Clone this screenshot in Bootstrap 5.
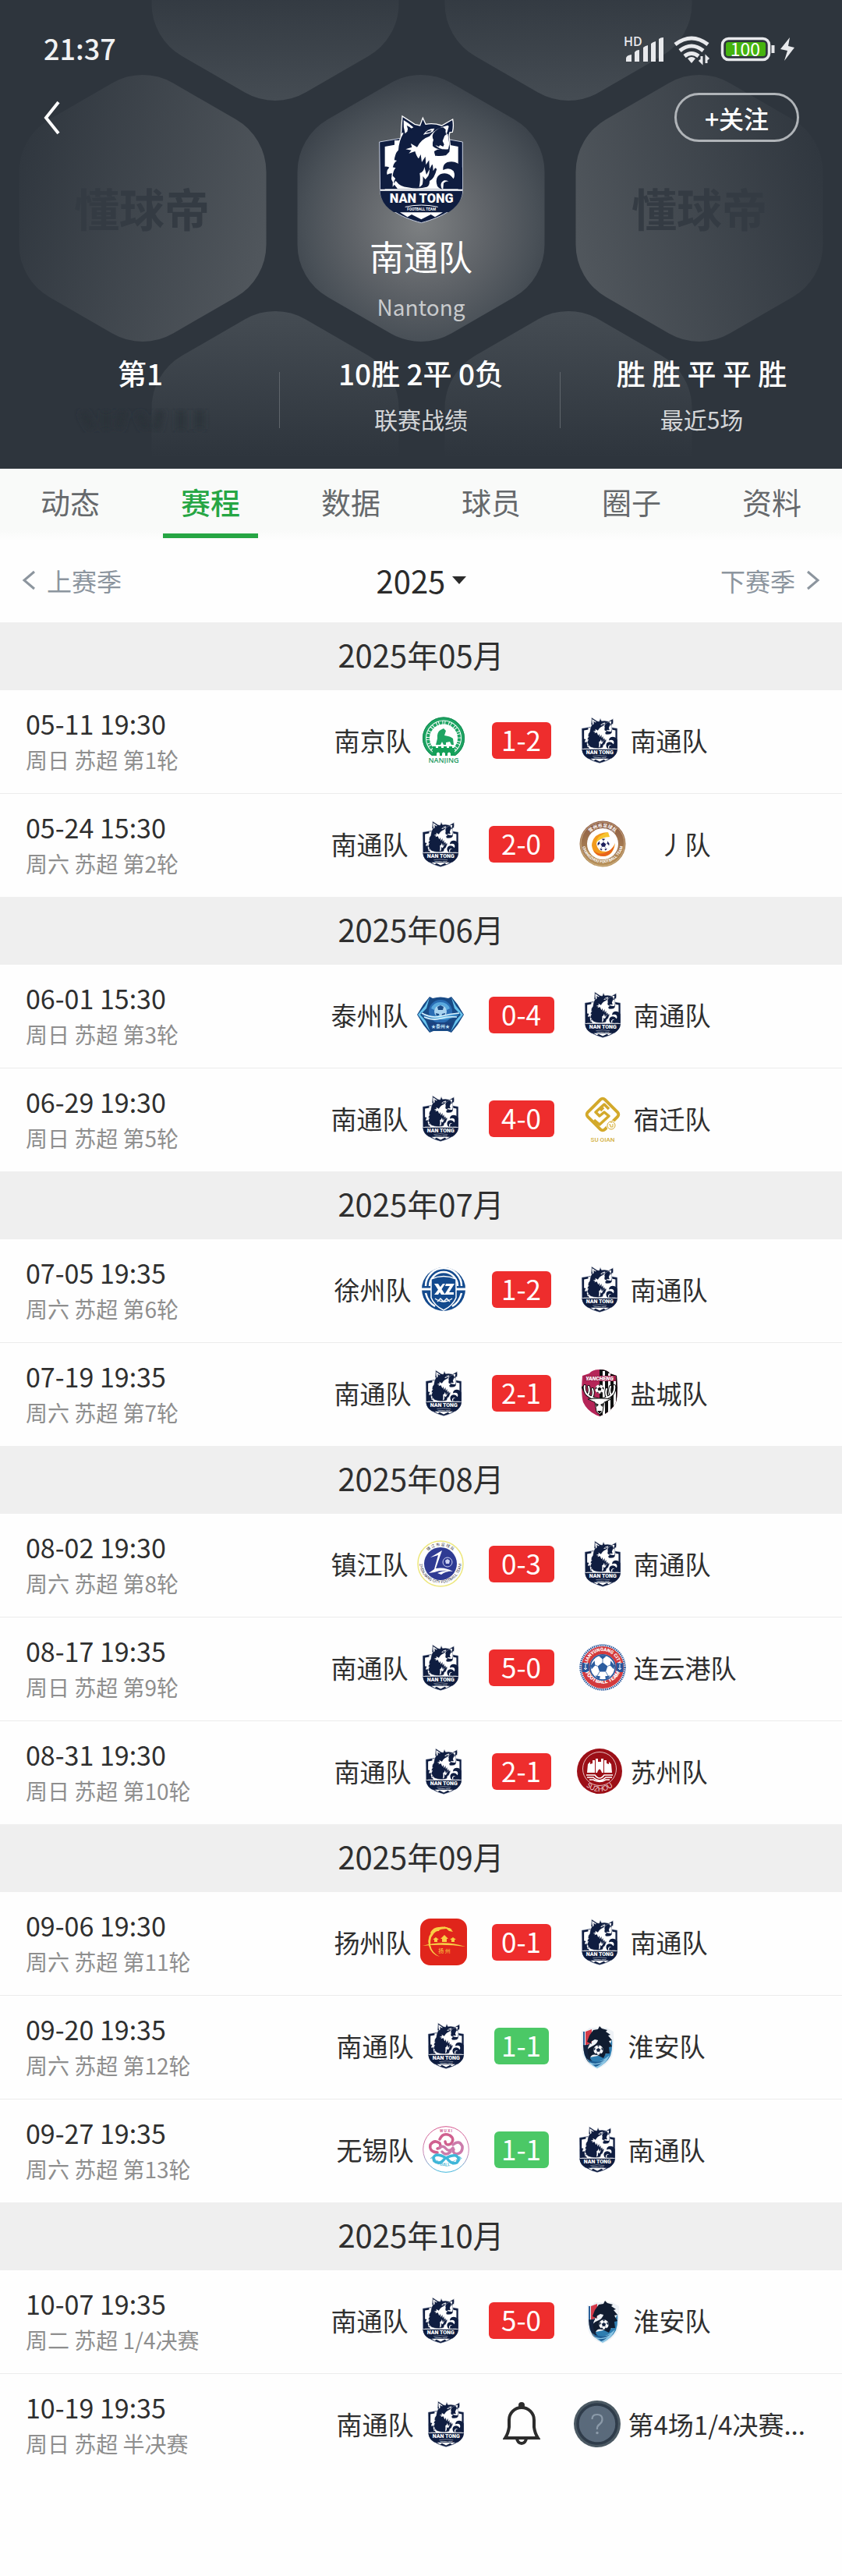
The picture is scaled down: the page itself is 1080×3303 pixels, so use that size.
<!DOCTYPE html>
<html lang="zh-CN">
<head>
<meta charset="utf-8">
<meta name="viewport" content="width=device-width, initial-scale=1">
<title>南通队 - 赛程</title>
<link href="https://cdn.jsdelivr.net/npm/bootstrap@5.3.0/dist/css/bootstrap.min.css" rel="stylesheet">
<style>
  body { font-family: "Noto Sans CJK SC", "Noto Sans", sans-serif; color: #2f2f2f; background: #fefefe; }
  a { color: inherit; text-decoration: none; }
  button, select { font-family: inherit; color: inherit; }
  .team-head { background: #2e353d; color: #fff; isolation: isolate; }
  .head-art { position: absolute; inset: 0; width: 100%; height: 100%; z-index: -1; }
  .status-line { padding: 36px 60px 0 56px; height: 88px; }
  .clock { font-size: 36px; font-weight: 500; line-height: 50px; color: #f1f2f3; }
  .top-row { padding: 31px 55px 0 55px; }
  .side-col { width: 160px; }
  .back-btn { height: 63px; }
  .follow-btn { width: 160px; height: 63px; border: 3px solid #b0b4b8; border-radius: 32px; font-size: 32px; line-height: 50px; font-weight: 500; }
  .crest-lg { width: 112px; height: 140px; margin-top: 28px; }
  .team-title { font-size: 44px; line-height: 50px; margin: 16px 0 20px; font-weight: 400; }
  .team-sub { font-size: 28px; line-height: 40px; color: #c9cbcd; }
  .stat-row { padding: 40px 0 44px; }
  .stat-row > div { flex: 1 1 0; position: relative; }
  .stat-row > div + div::before { content: ""; position: absolute; left: -2px; top: 24px; bottom: 8px; width: 1px; background: #5f656b; }
  .stat-main { font-size: 37px; line-height: 50px; font-weight: 500; }
  .stat-label { font-size: 30px; line-height: 40px; margin-top: 14px; color: #d4d6d8; min-height: 40px; }
  .tab-strip { background: linear-gradient(#f9faf9 85%, #fefefe); }
  .tab-strip a { flex: 1 1 0; height: 93px; padding-top: 14px; font-size: 38px; line-height: 56px; color: #66696c; text-align: center; }
  .tab-strip a.active { color: #26a644; font-weight: 500; }
  .tab-strip a.active::after { content: ""; display: block; width: 122px; height: 6px; margin: 13px auto 0; background: #26a644; }
  .season-row { height: 104px; padding: 0 28px 5px; font-size: 32px; color: #8c959e; }
  .season-row a { gap: 14px; }
  .season-pick { gap: 8px; color: #2b2b2b; }
  .season-pick select { appearance: none; border: 0; padding: 0; background: none; font-size: 40px; line-height: 60px; }
  .month-bar { background: #efefef; height: 87px; font-size: 40px; line-height: 83px; margin: 0; font-weight: 400; text-align: center; }
  .match-row { height: 132px; padding-bottom: 4px; }
  .match-row + .match-row { border-top: 1px solid #ececec; height: 133px; }
  .when { flex: 0 0 257px; padding-left: 33px; white-space: nowrap; }
  .when time { display: block; font-size: 34px; line-height: 48px; padding-top: 2px; }
  .when span { display: block; font-size: 28px; line-height: 44px; color: #8e8e8e; }
  .side { flex: 1 1 0; min-width: 0; gap: 11px; font-size: 33px; line-height: 48px; white-space: nowrap; }
  .side.away { gap: 10px; }
  .crest { width: 60px; height: 60px; flex: none; }
  .duel { gap: 32px; }
  .score { width: 84px; height: 47px; border-radius: 6px; background: #ee2d2d; color: #fff; font-size: 35px; line-height: 44px; text-align: center; }
  .score.mid { width: 76px; }
  .score.draw { width: 70px; background: #4bc866; }
  .bell-btn { width: 70px; line-height: 0; }
</style>
<script src="https://cdn.jsdelivr.net/npm/bootstrap@5.3.0/dist/js/bootstrap.bundle.min.js"></script>
</head>
<body>

<svg width="0" height="0" class="position-absolute" aria-hidden="true">
  <defs>
    <linearGradient id="gBrown" x1="0" y1="0" x2="0" y2="1"><stop offset="0" stop-color="#8b5a44"/><stop offset="1" stop-color="#b8935a"/></linearGradient>
    <linearGradient id="gPink" x1="0" y1="0" x2="0" y2="1"><stop offset="0" stop-color="#d6558c"/><stop offset=".6" stop-color="#c98bb8"/><stop offset="1" stop-color="#3db8dc"/></linearGradient>
    <linearGradient id="gSea" x1="0" y1="0" x2="1" y2="0"><stop offset="0" stop-color="#1d5ba0"/><stop offset=".5" stop-color="#6fc3ec"/><stop offset="1" stop-color="#1d6cb4"/></linearGradient>
    <symbol id="ball" viewBox="0 0 40 40">
      <circle cx="20" cy="20" r="19" fill="#fff"/>
      <g fill="currentColor"><path d="M20 12l8 6-3 9H15l-3-9z"/><path d="M14 2q6-2 12 0l-6 5zM1 17l6-8 1 8-6 6zM39 17l-6-8-1 8 6 6zM8 33l8 1-1 5q-5-2-7-6zM32 33l-8 1 1 5q5-2 7-6z"/></g>
      <path d="M20 12V6M28 18l5-2M25 27l4 7M15 27l-4 7M12 18l-5-2" stroke="currentColor" fill="none"/>
    </symbol>

    <symbol id="nt" viewBox="252 83 334 420">
      <path d="M259 188l82-14h160l78 14v190c-3 58-78 100-159 121-82-21-155-63-158-121z" fill="#0f1d40" stroke="#c9d0e0" stroke-width="3"/>
      <path d="M280 206l37-7v-17h210v17l35 7v164H280z" fill="#fff"/>
      <path d="M264 368V290q16-12 33-4-13 12-8 28 12-10 32-2-22 6-14 24 6 14 22 32zM578 368v-80q-22-32-58-22-18 8-16 30 24-12 40 4 8 16 0 30-20-30-50-18-24 14-12 46 6 10 18 12-12-24 8-34 18-2 22 14-2 12-10 18z" fill="#0f1d40"/>
      <path d="M506 346q20-16 30 6l-6 16h-26z" fill="#0f1d40"/>
      <path d="M342 163q2-40 5-74l48 31 20 5 11-29 11 24q30-6 62 5l42-24q5 26-1 49l-10 1q-4 14-2 24l4 34-2 18-14 14q-20 4-38 2-16 6-20 20 8 20 24 28-10 40-28 48 0 20-12 24-32 10-74 2-30-2-46-24l-10 14q0-18 6-26l-10-10q2-20 10-30l-10-2q4-18 14-26l-8-2q4-30 16-40 2-36 20-66z" fill="#0f1d40" stroke="#fff" stroke-width="4"/>
      <path d="M352 104q18 10 38 28l-8 4-18-12 6 20-12 12q-8-26-6-52z" fill="#fff"/>
      <path d="M366 146l6-18 16 14z" fill="#0f1d40"/>
      <path d="M427 160q16-24 44-24l-6 12q-16 10-38 12z" fill="#fff"/><path d="M436 153q10-10 24-9-4 10-24 9z" fill="#0f1d40"/>
      <path d="M522 124q-48 10-70 42-32 10-48 42l-24-14 4 14-24 8 22 4-10 12 24-8q6 20 14 28l8-16 4 30 14-22 2 32 12-18 2 34 12-22 2 30 12-20q6-14 4-26-12-16-12-30 16-12 32-8 8-4 10-16-24 2-44-18-12-20 6-36 16-14 30-14l10 8-2 28 8-18 6-22z" fill="#fff"/>
      <path d="M464 204q-4-26 18-44 12-12 30-12 6 8 0 20l4 34q-6 14-22 14-18 0-30-12z" fill="#0f1d40"/>
      <path d="M474 200l14 6 4-6 12 6 4-8-6-14 8-20 12-8 6 40-4 20q-32 4-50-16z" fill="#fff"/>
      <path d="M412 362q6-30 2-54 16-4 18-24l8 30 12-22q0 32-22 48-4 14-18 22z" fill="#fff"/>
      <path d="M424 356q4-24 2-36l10 12 12-14q-2 22-24 38z" fill="#0f1d40"/>
      <path d="M262 370h316v12q-2 42-52 76H314q-48-30-52-76z" fill="#0f1d40"/>
      <path d="M262 373h316" stroke="#fff" stroke-width="6"/>
      <text x="421" y="421" text-anchor="middle" font-family="Roboto" font-weight="900" font-size="49" fill="#fff">NAN TONG</text>
      <path d="M358 438q62-14 126 0" stroke="#fff" stroke-width="3" fill="none"/>
      <text x="421" y="452" text-anchor="middle" font-family="Roboto" font-weight="700" font-size="14" fill="#fff">FOOTBALL TEAM</text>
      <path d="M338 459h165l-30 18-16-10-37 19-37-19-16 10z" fill="#fff"/>
    </symbol>

    <symbol id="nj" viewBox="0 0 60 60">
      <circle cx="30" cy="27.500" r="25" fill="none" stroke="#1ea463" stroke-width="4"/>
      <circle cx="30" cy="27.500" r="20" fill="none" stroke="#1ea463" stroke-width="4" stroke-dasharray="4 1 2 1"/>
      <circle cx="30" cy="27.500" r="26.500" fill="none" stroke="#138a50"/>
      <path d="M20 36l2-8q-1-8 4-11l4-2 3 3-2 6q8 1 11 4l1 8h-3l-2-4-5 1v3h-3l-2-4-2 4z" fill="#1ea463"/>
      <path d="M16 38h4v2h3v-2h4v2h3v-2h4v2h3v-2h4v2h3v10H16z" fill="#13a058"/>
      <path d="M21 50v-3q2-3 4 0v3zM28 50v-3q2-3 4 0v3zM35 50v-3q2-3 4 0v3z" fill="#fff"/>
      <rect x="9" y="50" width="42" height="10" fill="#fff"/>
      <text x="30" y="59" text-anchor="middle" font-family="Open Sans" font-weight="600" font-size="9" fill="#249a62">NANJING</text>
    </symbol>

    <symbol id="cz" viewBox="0 0 60 60">
      <circle cx="30" cy="30" r="29.500" fill="url(#gBrown)"/><circle cx="30" cy="30" r="28" fill="none" stroke="#d8bf96" stroke-width=".7"/>
      <circle cx="30" cy="30" r="20" fill="#fff"/>
      <path id="czT" d="M8.500 26a22 22 0 0 1 43 0" fill="none"/><path id="czB" d="M4 33a26.500 26.500 0 0 0 52 0" fill="none"/>
      <text font-family="Noto Sans CJK SC" font-size="6" font-weight="700" fill="#fff"><textPath href="#czT" startOffset="50%" text-anchor="middle">常州市足球队</textPath></text>
      <text font-family="Roboto" font-size="5" font-weight="700" fill="#fff"><textPath href="#czB" startOffset="50%" text-anchor="middle">CHANGZHOU FOOTBALL TEAM</textPath></text>
      <path d="M37 15q-20 1-21 17 2 15 17 14 11-2 13-17-4 10-12 11-11 0-12-10 1-9 15-15z" fill="#f29a1c"/>
      <path d="M37 15q-14 4-16 14 8-8 18-8z" fill="#f6c52e"/><path d="M18 38q8 8 18 2 6-3 9-8-3 13-14 14-9 0-13-8z" fill="#e8631e"/>
      <use href="#ball" x="23" y="23" width="16" height="16" color="#1d1f5c"/>
    </symbol>

    <symbol id="tz" viewBox="0 0 60 60">
      <path d="M16 7l4 2q10-3 20 0l4-2 8 10 8 13-8 13-8 10-5-2H21l-5 2-8-10L0 30l8-13z" fill="#184a86"/>
      <path d="M16 8l-6 11-9 11 9 12 7 10-6-14-7-8 8-8zM44 8l6 11 9 11-9 12-7 10 6-14 7-8-8-8z" fill="#69c4ee"/>
      <circle cx="30" cy="26" r="15" fill="#2a6db4"/><path d="M18 22a13 13 0 0 1 24 0l-4 2a9 9 0 0 0-16 0z" fill="#5aa9de"/>
      <circle cx="30" cy="26" r="8" fill="#a9d4f0"/><path d="M26 20l4-2 4 2-1 4h-6zM24 28l4 1 1 4-4 0zM36 28l-4 1-1 4 4 0z" fill="#1b4c88"/>
      <path d="M5 27q12 6 22 4 8 0 13-1l15-3-3 5q-12 5-22 4-14 1-23-4z" fill="url(#gSea)"/>
      <path d="M6 28q12 7 24 4t24-4M9 33q12 5 21 2t21-2" stroke="#d8f1fc" fill="none" stroke-width="1.500"/>
      <path d="M14 40h32l-4 9H18z" fill="#1b4280"/><text x="30" y="47" text-anchor="middle" font-family="Noto Sans CJK SC" font-weight="700" font-size="6" fill="#bfe3f7">★泰州★</text>
    </symbol>

    <symbol id="sq" viewBox="0 0 60 60">
      <rect x="14.500" y="9.500" width="31" height="31" rx="4" transform="rotate(45 30 25)" fill="none" stroke="#d3a92b" stroke-width="4"/>
      <path d="M38 18L32 12 21 22l5 5 6-5 6 5-12 11-7-6M27 20l4-4" fill="none" stroke="#d3a92b" stroke-width="3.500" stroke-linejoin="round"/>
      <circle cx="41" cy="39" r="6.500" fill="#fff"/><circle cx="41" cy="39" r="5" fill="none" stroke="#d3a92b"/><path d="M38 38h2v3h3v-4M41 34v2" stroke="#d3a92b" fill="none"/>
      <text x="30" y="60" text-anchor="middle" font-family="Roboto" font-weight="500" font-size="8" fill="#d3b040">SU QIAN</text>
    </symbol>

    <symbol id="xz" viewBox="0 0 60 60">
      <circle cx="30" cy="30" r="28" fill="#134a8e"/>
      <path d="M7 26a23 23 0 0 1 46 0M12 26a18 18 0 0 1 36 0M7 35q3 12 12 17M53 35q-3 12-12 17" stroke="#fff" stroke-width="2.500" fill="none"/>
      <path d="M2 30h12M46 30h12" stroke="#fff" stroke-width="3"/>
      <path d="M14 17q16-7 32 0v24q-4 10-16 16-12-6-16-16z" fill="#134a8e" stroke="#fff" stroke-width="1.500"/>
      <path d="M18 23h5l9 14h-5zM29 23h3l-9 14h-5zM33 23h11l-7 11h6v3H31l7-11h-6z" fill="#fff"/>
      <path d="M19 42q11 8 22 0M22 46l4-4 4 4 4-4 4 4" stroke="#fff" stroke-width="1.500" fill="none"/>
    </symbol>

    <symbol id="yc" viewBox="0 0 60 60">
      <path d="M8 8l9-3q3-5 13-5t13 5l9 3q2 24-1 34-6 13-21 18Q15 55 9 42 6 32 8 8z" fill="#b52558"/>
      <path d="M30 0q10 0 13 5l9 3q2 24-1 34-6 13-21 18z" fill="#111"/>
      <path d="M34 2h3v56h-3zM41 5h3v47l-3 3zM48 9h3v33l-3 5z" fill="#fff"/>
      <rect x="10" y="8" width="41" height="7" fill="#a3204e"/>
      <text x="30" y="14" text-anchor="middle" font-family="Roboto" font-weight="900" font-style="italic" font-size="7" fill="#fff">YANCHENG</text>
      <use href="#ball" x="24" y="19" width="12" height="12" color="#111"/>
      <path id="ant" d="M27 38q-8-1-14-7-3-5-2-10M15 33q3-5 1-11M20 36q3-5 1-11M11 27l-2-4" fill="none" stroke="#111" stroke-width="4" stroke-linecap="round"/>
      <path d="M33 38q8-1 14-7 3-5 2-10M45 33q-3-5-1-11M40 36q-3-5-1-11M49 27l2-4" fill="none" stroke="#111" stroke-width="4" stroke-linecap="round"/>
      <path d="M27 38q-8-1-14-7-3-5-2-10M15 33q3-5 1-11M20 36q3-5 1-11M33 38q8-1 14-7 3-5 2-10M45 33q-3-5-1-11M40 36q-3-5-1-11" fill="none" stroke="#fff" stroke-width="2" stroke-linecap="round"/>
      <path d="M15 38l12-1h6l12 1-9 4-2 12-4 4-4-4-2-12z" fill="#fff" stroke="#111"/><path d="M25 43l4 2-3 3zM35 43l-4 2 3 3zM27 53h6l-3 4z" fill="#111"/>
    </symbol>

    <symbol id="zj" viewBox="0 0 60 60">
      <circle cx="30" cy="30" r="29" fill="#fff" stroke="#ede77c" stroke-width="1.500"/><circle cx="30" cy="30" r="21" fill="#2f3b93"/>
      <path id="zjT" d="M7.500 24a23.500 23.500 0 0 1 45 0" fill="none"/><path id="zjB" d="M3 28a27 27 0 0 0 54 0" fill="none"/>
      <text font-family="Noto Sans CJK SC" font-size="5" fill="#334"><textPath href="#zjT" startOffset="50%" text-anchor="middle">镇 江 市 足 球 队</textPath></text>
      <text font-family="Roboto" font-size="5" fill="#334"><textPath href="#zjB" startOffset="50%" text-anchor="middle">ZHENJIANG CITY FOOTBALL TEAM</textPath></text>
      <path d="M17 22l15-9-8 23q12-2 22 4-14-3-24 1l-7 1 7-5 5-18z" fill="#fff"/><path d="M26 42q10-5 20-2-8-1-15 4z" fill="#fff"/>
      <circle cx="39" cy="28" r="6" fill="none" stroke="#cfd4f2"/><path d="M36 26l3-2 3 2-1 4h-4z" fill="#cfd4f2"/>
    </symbol>

    <symbol id="ly" viewBox="0 0 60 60">
      <circle cx="30" cy="30" r="28" fill="#fff"/><circle cx="30" cy="30" r="28.500" fill="none" stroke="#27569c" stroke-width="2.500" stroke-dasharray="1.500 1"/>
      <circle cx="30" cy="30" r="22" fill="none" stroke="#d33a3d" stroke-width="10"/>
      <path d="M8 24v12M52 24v12" stroke="#27569c" stroke-width="9"/><path d="M8 26v7m-2-2q2 3 4 0M52 26v7m-2-2q2 3 4 0" stroke="#fff" fill="none"/>
      <path id="lyT" d="M10 29a20 20 0 0 1 40 0" fill="none"/><path id="lyB" d="M6 31a24.500 24.500 0 0 0 48 0" fill="none"/>
      <text font-family="Roboto" font-size="6" font-weight="900" fill="#fff"><textPath href="#lyT" startOffset="50%" text-anchor="middle">LIANYUNGANG CITY</textPath></text>
      <text font-family="Roboto" font-size="7" font-weight="900" fill="#fff"><textPath href="#lyB" startOffset="50%" text-anchor="middle">FOOTBALL TEAM</textPath></text>
      <circle cx="30" cy="30" r="17" fill="#27569c"/><use href="#ball" x="14" y="14" width="32" height="32" color="#2b5c9f"/>
    </symbol>

    <symbol id="sz" viewBox="0 0 60 60">
      <circle cx="30" cy="30" r="29" fill="#9c0f17"/><circle cx="30" cy="27" r="21.500" fill="none" stroke="#e6bfc0"/>
      <path d="M14 32l1-11 3-3v3l3-1v-4h3v16zM46 32l-1-11-3-3v3l-3-1v-4h-3v16zM25 32V14h3v4h4v-4h3v18h-2q-3-9-6 0z" fill="#fff"/>
      <path d="M13 35h11q6 8 12 0h11M14 38h8q8 8 16 0h8M17 41h5q8 5 16 0h5" stroke="#fff" stroke-width="1.500" fill="none"/>
      <path id="szB" d="M4 30a25.500 25.500 0 0 0 52 0" fill="none"/>
      <text font-family="Lato" font-size="9" fill="#f0d5d5"><textPath href="#szB" startOffset="50%" text-anchor="middle">SUZHOU</textPath></text>
    </symbol>

    <symbol id="yz" viewBox="0 0 60 60">
      <rect width="60" height="60" rx="13" fill="#e0251b"/>
      <path d="M41 14Q28 7 18 14 8 22 11 35q3 11 14 14-10-5-12-15-1-12 8-18 10-5 20-2z" fill="#f9cf45"/><path d="M13 18q4-8 13-7l-2 5q-6 0-9 5zM30 10l9 3 3 4-5-1z" fill="#f9cf45"/>
      <path d="M3 35q28-8 55 1-28-4-55-1zM16 27l4-3 4 3zM18 27h4v3h-4zM26 26l5-5 5 5zM28 26h6v4h-6zM38 27l4-3 4 3zM40 27h4v3h-4z" fill="#f9cf45"/>
      <text x="31" y="44" text-anchor="middle" font-family="Noto Sans CJK SC" font-size="7" fill="#f9cf45">扬 州</text>
    </symbol>

    <symbol id="ha" viewBox="0 0 60 60">
      <path d="M10 11q7 0 10-4h22l9 5q1 21-2 32-6 11-19 16-14-5-18-16-3-10-2-33z" fill="#eef2f6"/>
      <path d="M12 12h2v22l-2-3z" fill="#2c5f98"/><path d="M15 12l8-3v17l-8 4z" fill="#d33a49"/>
      <path d="M49 22q1 12-2 21-5 10-17 15-11-4-16-15-2-8-1-16l8 18 20-4z" fill="#2e7db0"/>
      <path d="M20 17l5-7 6-1 2-4 3 3 7 2-2 2 6 4-3 1 5 6-4 1 4 7-4 1 1 8-5 0-3 6-8-4q-8-2-9 4-1 4 3 8-8-3-9-11 0-9 8-12 7-3 8-8l-4-1-5 3 1 3-6-3z" fill="#101c30"/>
      <path d="M12 29q5 1 9-2-6 9-1 18 2 4 6 7-9-3-12-10-2-6-2-13z" fill="#13233f"/>
      <path d="M16 46q12 12 30-4-5 12-16 17-9-4-14-13z" fill="#8cc6e4"/><path d="M18 48q12 5 22 0-10 8-20 3zM24 54q8 1 13-3-5 5-9 6z" fill="#1f5f96"/>
      <use href="#ball" x="25" y="29" width="13" height="13" color="#13233f"/>
    </symbol>

    <symbol id="wx" viewBox="0 0 60 60">
      <circle cx="30" cy="30" r="29.300" fill="#fff" stroke="url(#gPink)"/>
      <path id="wxB" d="M5 31a25.500 25.500 0 0 0 50 0" fill="none"/>
      <text x="30" y="8" text-anchor="middle" font-family="Roboto" font-size="5" font-weight="700" fill="#cf5b93">W U X I</text>
      <text font-family="Roboto" font-size="6" font-weight="500" fill="#45b4d3"><textPath href="#wxB" startOffset="50%" text-anchor="middle">FOOTBALL TEAM</textPath></text>
      <g fill="none" stroke-width="3.500" stroke-linecap="round"><path d="M22 17q4-9 13-5 7 5 1 11-6 3-7-3M19 34q-11-1-9-10 5-7 12-2 3 6-3 7" stroke="#d0608f"/><path d="M39 24q8-7 12 2 1 9-8 10-5-2-3-6M22 28q4-4 8 1t9-1M25 33q5 6 11 0" stroke="#cc7bab"/><path d="M29 41q-7 10-14 4-3-6 3-8 6 0 12 4 8-4 13-3 6 4 1 9-7 3-13-6" stroke="#3fb6d8"/></g>
    </symbol>

    <symbol id="unk" viewBox="0 0 60 60">
      <circle cx="30" cy="30" r="30" fill="#4b5963"/><circle cx="30" cy="30" r="25" fill="#5a6a7b" stroke="#2f3c4a" stroke-width="3.500"/>
      <path d="M23.500 24q0-6 6.500-6t6.500 6q0 4-3.500 6.500T30 37" stroke="#8b9aa9" stroke-width="2.200" fill="none"/><circle cx="30" cy="41.500" r="1.700" fill="#8b9aa9"/>
    </symbol>
  </defs>
</svg>

<header class="team-head position-relative overflow-hidden">
  <svg class="head-art" viewBox="0 0 1080 601" preserveAspectRatio="xMidYMid slice" aria-hidden="true">
    <defs>
      <path id="hex" d="M-39-160.500A78 78 0 0 1 39-160.500L119.500-114A78 78 0 0 1 158.500-46.500V46.500A78 78 0 0 1 119.500 114L39 160.500A78 78 0 0 1-39 160.500L-119.500 114A78 78 0 0 1-158.500 46.500V-46.500A78 78 0 0 1-119.500-114Z"/>
      <radialGradient id="hMid" gradientUnits="userSpaceOnUse" cx="0" cy="20" r="185"><stop offset="0" stop-color="#7d8082"/><stop offset=".45" stop-color="#606469"/><stop offset=".8" stop-color="#495057"/><stop offset="1" stop-color="#3b424a"/></radialGradient>
      <linearGradient id="hL" x1="0" y1=".3" x2="1" y2=".6"><stop offset="0" stop-color="#30373f"/><stop offset="1" stop-color="#50565c"/></linearGradient>
      <linearGradient id="hR" x1="1" y1=".3" x2="0" y2=".6"><stop offset="0" stop-color="#30373f"/><stop offset="1" stop-color="#50565c"/></linearGradient>
      <linearGradient id="hUp" x1="0" y1="0" x2="0" y2="1"><stop offset=".5" stop-color="#2e353d"/><stop offset="1" stop-color="#454c53"/></linearGradient>
      <linearGradient id="hDn" x1="0" y1="0" x2="0" y2="1"><stop offset="0" stop-color="#454c53"/><stop offset=".55" stop-color="#2e353d"/></linearGradient>
      <filter id="soft"><feGaussianBlur stdDeviation="4"/></filter>
    </defs>
    <use href="#hex" x="353" y="-42" fill="url(#hUp)"/><use href="#hex" x="729" y="-42" fill="url(#hUp)"/>
    <use href="#hex" x="353" y="570" fill="url(#hDn)"/><use href="#hex" x="729" y="570" fill="url(#hDn)"/>
    <use href="#hex" x="183" y="267" fill="url(#hL)"/><use href="#hex" x="897" y="267" fill="url(#hR)"/>
    <use href="#hex" x="540" y="267" fill="url(#hMid)"/>
    <g font-family="Noto Sans CJK SC" font-weight="700" font-size="58" fill="#343b43" text-anchor="middle"><text x="182" y="291">懂球帝</text><text x="897" y="291">懂球帝</text></g>
    <path d="M106 528l12 22M136 526v26M158 526l-6 24M178 530l10 20M206 526l-6 26M232 526v26M256 526v24" stroke="#293038" stroke-width="9" filter="url(#soft)"/>
  </svg>

  <div class="status-line d-flex justify-content-between align-items-start">
    <span class="clock">21:37</span>
    <svg class="mt-2" width="222" height="40" viewBox="798 44 222 40" role="img" aria-label="信号 无线网络 电量100">
      <text x="800" y="59" font-family="Open Sans" font-weight="600" font-size="16" fill="#e8e9ec">HD</text>
      <path d="M803 79v-4q0-4 7-5v9zM814 79V67q2-3 6-3v15zM825 79V61q2-2 6-3v21zM835 79V56q2-2 6-3v26zM845 79V50q2-2 6-2v31z" fill="#e8e9ec"/>
      <path d="M866 57q21-16 42 0M872 65q15-12 30 0M878 72q9-7 18 0" fill="none" stroke="#e8e9ec" stroke-width="5"/>
      <path d="M882 75q5-4 10 0l-5 6z" fill="#e8e9ec"/><path d="M900 72v8l-3-3M906 81v-8l3 3" fill="none" stroke="#e8e9ec" stroke-width="3"/>
      <rect x="926.500" y="49.500" width="60" height="27" rx="8" fill="none" stroke="#e8e9ec" stroke-width="3.500"/><rect x="931" y="54" width="51" height="18" rx="3" fill="#45b30f"/>
      <path d="M991.500 58v10" stroke="#e8e9ec" stroke-width="4"/>
      <text x="956" y="72" text-anchor="middle" font-family="Noto Sans CJK SC" font-size="23" fill="#fff">100</text>
      <path d="M1013 48l-12 15 9 2-4 13 13-17-8-2z" fill="#e8e9ec"/>
    </svg>
  </div>

  <div class="top-row d-flex justify-content-between align-items-start">
    <div class="side-col">
      <button type="button" class="btn back-btn p-0 border-0 d-flex align-items-center" aria-label="返回"><svg width="24" height="44" viewBox="0 0 24 44" fill="none" stroke="#fff" stroke-width="4"><path d="M20 2L4 22l16 20"/></svg></button>
    </div>
    <div class="text-center d-flex flex-column align-items-center">
      <svg class="crest-lg"><use href="#nt"/></svg>
      <h1 class="team-title">南通队</h1>
      <div class="team-sub">Nantong</div>
    </div>
    <div class="side-col"><button type="button" class="follow-btn bg-transparent text-white p-0">+关注</button></div>
  </div>

  <div class="stat-row d-flex text-center">
    <div><div class="stat-main">第1</div><div class="stat-label"></div></div>
    <div><div class="stat-main">10胜 2平 0负</div><div class="stat-label">联赛战绩</div></div>
    <div><div class="stat-main">胜 胜 平 平 胜</div><div class="stat-label">最近5场</div></div>
  </div>
</header>

<nav class="tab-strip d-flex" aria-label="球队栏目">
  <a href="#">动态</a><a href="#" class="active" aria-current="page">赛程</a><a href="#">数据</a><a href="#">球员</a><a href="#">圈子</a><a href="#">资料</a>
</nav>

<div class="season-row d-flex justify-content-between align-items-center">
  <a href="#" class="d-flex align-items-center"><svg width="18" height="26" viewBox="0 0 18 26" fill="none" stroke="#8c959e" stroke-width="3"><path d="M16 2L3 13l13 11"/></svg>上赛季</a>
  <div class="season-pick d-flex align-items-center">
    <select aria-label="赛季"><option>2025</option></select>
    <svg width="18" height="10" viewBox="0 0 18 10"><path d="M0 0h18L9 10z" fill="#2b2b2b"/></svg>
  </div>
  <a href="#" class="d-flex align-items-center">下赛季<svg width="18" height="26" viewBox="0 0 18 26" fill="none" stroke="#8c959e" stroke-width="3"><path d="M2 2l13 11L2 24"/></svg></a>
</div>

<main>
  <section>
    <h2 class="month-bar">2025年05月</h2>
    <div class="match-row d-flex align-items-center">
      <div class="when"><time>05-11 19:30</time><span>周日 苏超 第1轮</span></div>
      <div class="duel d-flex align-items-center flex-fill"><div class="side d-flex align-items-center justify-content-end">南京队<svg class="crest"><use href="#nj"/></svg></div><div class="score mid">1-2</div><div class="side away d-flex align-items-center"><svg class="crest"><use href="#nt"/></svg>南通队</div></div>
    </div>
    <div class="match-row d-flex align-items-center">
      <div class="when"><time>05-24 15:30</time><span>周六 苏超 第2轮</span></div>
      <div class="duel d-flex align-items-center flex-fill"><div class="side d-flex align-items-center justify-content-end">南通队<svg class="crest"><use href="#nt"/></svg></div><div class="score">2-0</div><div class="side away d-flex align-items-center"><svg class="crest"><use href="#cz"/></svg>　丿队</div></div>
    </div>
  </section>
  <section>
    <h2 class="month-bar">2025年06月</h2>
    <div class="match-row d-flex align-items-center">
      <div class="when"><time>06-01 15:30</time><span>周日 苏超 第3轮</span></div>
      <div class="duel d-flex align-items-center flex-fill"><div class="side d-flex align-items-center justify-content-end">泰州队<svg class="crest"><use href="#tz"/></svg></div><div class="score">0-4</div><div class="side away d-flex align-items-center"><svg class="crest"><use href="#nt"/></svg>南通队</div></div>
    </div>
    <div class="match-row d-flex align-items-center">
      <div class="when"><time>06-29 19:30</time><span>周日 苏超 第5轮</span></div>
      <div class="duel d-flex align-items-center flex-fill"><div class="side d-flex align-items-center justify-content-end">南通队<svg class="crest"><use href="#nt"/></svg></div><div class="score">4-0</div><div class="side away d-flex align-items-center"><svg class="crest"><use href="#sq"/></svg>宿迁队</div></div>
    </div>
  </section>
  <section>
    <h2 class="month-bar">2025年07月</h2>
    <div class="match-row d-flex align-items-center">
      <div class="when"><time>07-05 19:35</time><span>周六 苏超 第6轮</span></div>
      <div class="duel d-flex align-items-center flex-fill"><div class="side d-flex align-items-center justify-content-end">徐州队<svg class="crest"><use href="#xz"/></svg></div><div class="score mid">1-2</div><div class="side away d-flex align-items-center"><svg class="crest"><use href="#nt"/></svg>南通队</div></div>
    </div>
    <div class="match-row d-flex align-items-center">
      <div class="when"><time>07-19 19:35</time><span>周六 苏超 第7轮</span></div>
      <div class="duel d-flex align-items-center flex-fill"><div class="side d-flex align-items-center justify-content-end">南通队<svg class="crest"><use href="#nt"/></svg></div><div class="score mid">2-1</div><div class="side away d-flex align-items-center"><svg class="crest"><use href="#yc"/></svg>盐城队</div></div>
    </div>
  </section>
  <section>
    <h2 class="month-bar">2025年08月</h2>
    <div class="match-row d-flex align-items-center">
      <div class="when"><time>08-02 19:30</time><span>周六 苏超 第8轮</span></div>
      <div class="duel d-flex align-items-center flex-fill"><div class="side d-flex align-items-center justify-content-end">镇江队<svg class="crest"><use href="#zj"/></svg></div><div class="score">0-3</div><div class="side away d-flex align-items-center"><svg class="crest"><use href="#nt"/></svg>南通队</div></div>
    </div>
    <div class="match-row d-flex align-items-center">
      <div class="when"><time>08-17 19:35</time><span>周日 苏超 第9轮</span></div>
      <div class="duel d-flex align-items-center flex-fill"><div class="side d-flex align-items-center justify-content-end">南通队<svg class="crest"><use href="#nt"/></svg></div><div class="score">5-0</div><div class="side away d-flex align-items-center"><svg class="crest"><use href="#ly"/></svg>连云港队</div></div>
    </div>
    <div class="match-row d-flex align-items-center">
      <div class="when"><time>08-31 19:30</time><span>周日 苏超 第10轮</span></div>
      <div class="duel d-flex align-items-center flex-fill"><div class="side d-flex align-items-center justify-content-end">南通队<svg class="crest"><use href="#nt"/></svg></div><div class="score mid">2-1</div><div class="side away d-flex align-items-center"><svg class="crest"><use href="#sz"/></svg>苏州队</div></div>
    </div>
  </section>
  <section>
    <h2 class="month-bar">2025年09月</h2>
    <div class="match-row d-flex align-items-center">
      <div class="when"><time>09-06 19:30</time><span>周六 苏超 第11轮</span></div>
      <div class="duel d-flex align-items-center flex-fill"><div class="side d-flex align-items-center justify-content-end">扬州队<svg class="crest"><use href="#yz"/></svg></div><div class="score mid">0-1</div><div class="side away d-flex align-items-center"><svg class="crest"><use href="#nt"/></svg>南通队</div></div>
    </div>
    <div class="match-row d-flex align-items-center">
      <div class="when"><time>09-20 19:35</time><span>周六 苏超 第12轮</span></div>
      <div class="duel d-flex align-items-center flex-fill"><div class="side d-flex align-items-center justify-content-end">南通队<svg class="crest"><use href="#nt"/></svg></div><div class="score draw">1-1</div><div class="side away d-flex align-items-center"><svg class="crest"><use href="#ha"/></svg>淮安队</div></div>
    </div>
    <div class="match-row d-flex align-items-center">
      <div class="when"><time>09-27 19:35</time><span>周六 苏超 第13轮</span></div>
      <div class="duel d-flex align-items-center flex-fill"><div class="side d-flex align-items-center justify-content-end">无锡队<svg class="crest"><use href="#wx"/></svg></div><div class="score draw">1-1</div><div class="side away d-flex align-items-center"><svg class="crest"><use href="#nt"/></svg>南通队</div></div>
    </div>
  </section>
  <section>
    <h2 class="month-bar">2025年10月</h2>
    <div class="match-row d-flex align-items-center">
      <div class="when"><time>10-07 19:35</time><span>周二 苏超 1/4决赛</span></div>
      <div class="duel d-flex align-items-center flex-fill"><div class="side d-flex align-items-center justify-content-end">南通队<svg class="crest"><use href="#nt"/></svg></div><div class="score">5-0</div><div class="side away d-flex align-items-center"><svg class="crest"><use href="#ha"/></svg>淮安队</div></div>
    </div>
    <div class="match-row d-flex align-items-center">
      <div class="when"><time>10-19 19:35</time><span>周日 苏超 半决赛</span></div>
      <div class="duel d-flex align-items-center flex-fill"><div class="side d-flex align-items-center justify-content-end">南通队<svg class="crest"><use href="#nt"/></svg></div>
        <button type="button" class="bell-btn btn p-0 border-0" aria-label="提醒"><svg width="48" height="56" viewBox="0 0 48 56" fill="none" stroke="#2c2c2c" stroke-width="4"><path d="M8 32V23a16 16 0 0 1 32 0v9q1 8 5 14H3q4-6 5-14z"/><path d="M18 46a6 7 0 0 0 12 0"/><circle cx="24" cy="4" r="2"/></svg></button>
        <div class="side away d-flex align-items-center"><svg class="crest"><use href="#unk"/></svg>第4场1/4决赛...</div></div>
    </div>
  </section>
</main>
</body>
</html>
